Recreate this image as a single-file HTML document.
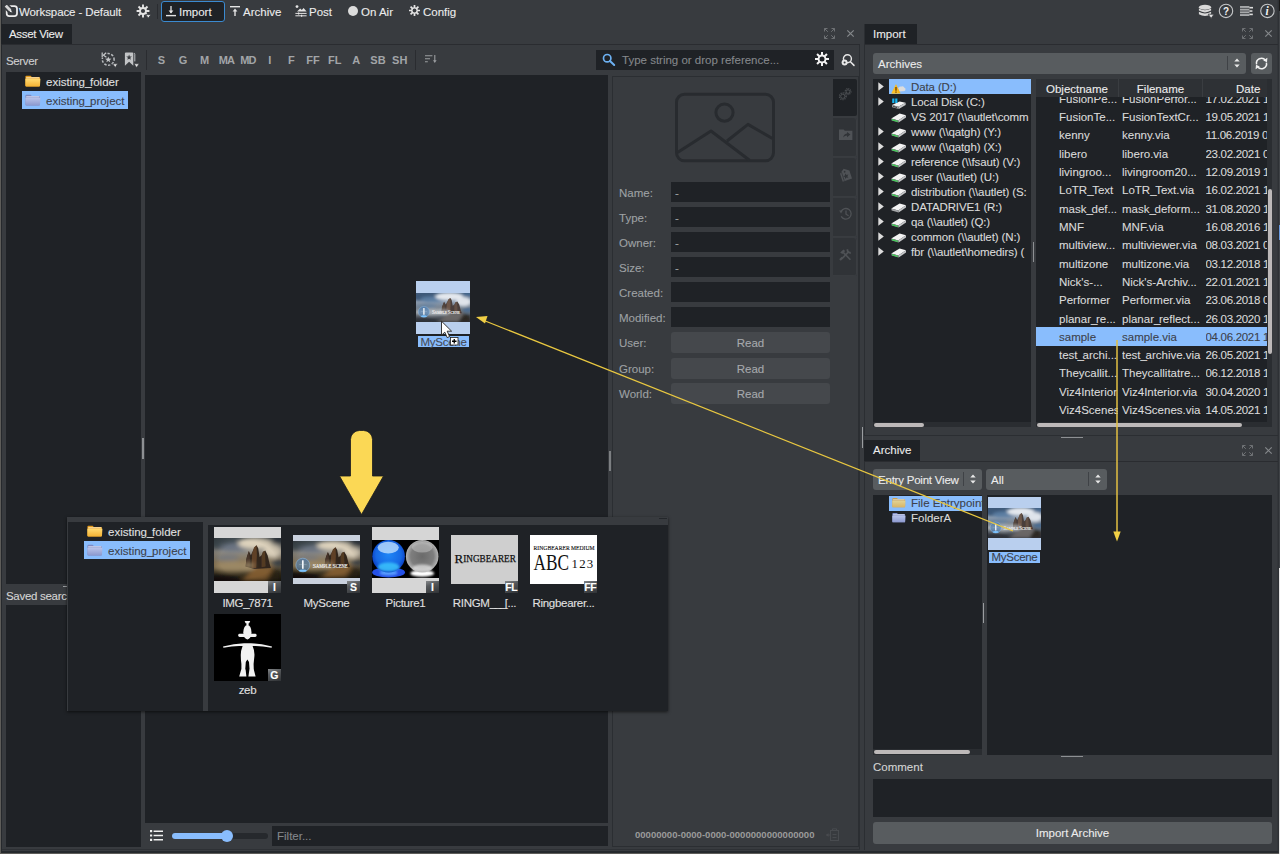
<!DOCTYPE html>
<html><head><meta charset="utf-8"><title>Workspace - Default</title>
<style>
*{box-sizing:border-box;margin:0;padding:0}
html,body{width:1280px;height:854px;overflow:hidden;background:#383b3f}
body{position:relative;font-family:"Liberation Sans",sans-serif;font-size:11.5px;color:#d6d6d6;line-height:14px;-webkit-text-stroke:0.1px}
.a{position:absolute}
.dk{background:#1f2226}
.t{position:absolute;white-space:nowrap}
.sel{background:#89bdfd;color:#3b4048}
svg{position:absolute;overflow:visible}
.fl{top:53px;width:22px;text-align:center;font-weight:bold;color:#a2a5a8;font-size:11px;-webkit-text-stroke:0}
.bdg{width:13.5px;height:11.5px;background:linear-gradient(160deg,#85888b 0%,#55585b 35%,#303336 100%);color:#fff;font-weight:bold;font-size:10.5px;line-height:12px;text-align:center;letter-spacing:-0.3px}
.c1{left:23px;width:59px;overflow:hidden}.c2{left:86px;width:80px;overflow:hidden}.c3{left:169.5px;width:62px;overflow:hidden;letter-spacing:-0.3px}
.u{font-style:normal;letter-spacing:-1.4px}
</style></head><body>
<!-- window edges -->
<div class="a" style="left:1px;top:0;width:1px;height:852px;background:#26292d"></div>
<div class="a" style="left:1277px;top:0;width:1px;height:852px;background:#33363a"></div>
<div class="a" style="left:0;top:851px;width:1279px;height:2px;background:#26292d"></div>
<div class="a" style="left:0;top:0;width:1px;height:854px;background:#5d5c59"></div>
<div class="a" style="left:0;top:853px;width:1280px;height:1px;background:#5d5c59"></div>
<div class="a" style="left:1278px;top:0;width:1px;height:853px;background:#2e3135"></div><div class="a" style="left:1279px;top:0;width:1px;height:568px;background:#404347"></div><div class="a" style="left:1279px;top:568px;width:1px;height:286px;background:#e4e4e4"></div><div class="a" style="left:1279px;top:225px;width:1px;height:15px;background:#6a9be0"></div><div class="a" style="left:1279px;top:0;width:1px;height:11px;background:#1a1a1a"></div>

<svg width="0" height="0" style="left:0;top:0"><defs>
<g id="ic-net"><path d="M0.3 6.6L8.6 1.6L15 3.2L7.2 8.6Z" fill="#f4f4f4"/><path d="M7.2 8.6L15 3.2V5.6L7.6 10.6Z" fill="#c4c6c8"/><path d="M0.3 6.6L7.2 8.6L7.6 10.6L0.6 8.6Z" fill="#8e9092"/><path d="M1 7.7L7 9.5" stroke="#3bd052" stroke-width="1.3"/></g>
<g id="ic-drv"><path d="M0.3 6.6L8.6 1.6L15 3.2L7.2 8.6Z" fill="#f4f4f4"/><path d="M7.2 8.6L15 3.2V5.6L7.6 10.6Z" fill="#c4c6c8"/><path d="M0.3 6.6L7.2 8.6L7.6 10.6L0.6 8.6Z" fill="#a4a6a8"/></g>
<g id="ic-win"><path d="M1 8L8.6 4.4L14.6 5.8L7.4 9.8Z" fill="#f4f4f4"/><path d="M7.4 9.8L14.6 5.8V8L7.8 12Z" fill="#c4c6c8"/><path d="M1 8L7.4 9.8L7.8 12L1.2 10.2Z" fill="#a4a6a8"/><path d="M2.2 9.4L6 10.5" stroke="#2a2d31" stroke-width="0.9"/><path d="M1.2 1.6H3.4V6H1.2ZM4.2 1.6H6.4V6H4.2Z" fill="#19b5f1"/></g>
<g id="ic-warn"><path d="M7 6.4Q8 4 10.4 4.6Q12.6 3.6 13.4 5.8Q15 6.2 14.4 8.2Q13.6 9.4 11.6 9.2L8 9.4Z" fill="#dcdcdc"/><path d="M5 2.2L9.6 11.4H0.4Z" fill="#f7b219"/><path d="M5 2.2L7.2 11.4H0.4Z" fill="#fcc72e" opacity=".7"/><path d="M5 5V8.8M5 9.6V10.8" stroke="#5a2c00" stroke-width="1.2"/></g>
<linearGradient id="fy" x1="0" y1="0" x2="0" y2="1"><stop offset="0" stop-color="#ffda72"/><stop offset="1" stop-color="#f3b234"/></linearGradient>
<linearGradient id="fb" x1="0" y1="0" x2="0" y2="1"><stop offset="0" stop-color="#b9c4ea"/><stop offset="1" stop-color="#8c99cf"/></linearGradient>
<g id="ic-fold-y"><path d="M0.4 1.8Q0.4 0.8 1.4 0.8H5.6L6.8 2H14Q15 2 15 3V10.4Q15 11.4 14 11.4H1.4Q0.4 11.4 0.4 10.4Z" fill="#e39a1c"/><path d="M1.2 2.9H14.4" stroke="#fff4d8" stroke-width="1"/><path d="M0.4 3.8H15.4L15 10.4Q15 11.4 14 11.4H1.4Q0.4 11.4 0.4 10.4Z" fill="url(#fy)"/></g>
<g id="ic-fold-b"><path d="M0.4 1.8Q0.4 0.8 1.4 0.8H5.6L6.8 2H14Q15 2 15 3V10.4Q15 11.4 14 11.4H1.4Q0.4 11.4 0.4 10.4Z" fill="#7e8bc4"/><path d="M1.2 2.9H14.4" stroke="#e8ecfa" stroke-width="1"/><path d="M0.4 3.8H15.4L15 10.4Q15 11.4 14 11.4H1.4Q0.4 11.4 0.4 10.4Z" fill="url(#fb)"/></g>
</defs></svg>
<svg width="0" height="0" style="left:0;top:0"><defs>
<linearGradient id="sky1" x1="0" y1="0" x2="0" y2="1"><stop offset="0" stop-color="#5f7fa0"/><stop offset="0.45" stop-color="#a9b6c4"/><stop offset="0.75" stop-color="#6b7580"/><stop offset="1" stop-color="#3c4652"/></linearGradient>
<linearGradient id="sky2" x1="0" y1="0" x2="0" y2="1"><stop offset="0" stop-color="#5a544a"/><stop offset="0.4" stop-color="#a89676"/><stop offset="0.75" stop-color="#6b5a3e"/><stop offset="1" stop-color="#1e1a14"/></linearGradient>
<radialGradient id="vig" cx="0.5" cy="0.5" r="0.75"><stop offset="0.55" stop-color="#000" stop-opacity="0"/><stop offset="1" stop-color="#000" stop-opacity="0.4"/></radialGradient>
<radialGradient id="bsph" cx="0.5" cy="0.45" r="0.55"><stop offset="0" stop-color="#1f86f6"/><stop offset="0.7" stop-color="#1668e4"/><stop offset="1" stop-color="#0a3cc0"/></radialGradient>
<radialGradient id="gsph" cx="0.5" cy="0.5" r="0.5"><stop offset="0" stop-color="#6a6a6a"/><stop offset="0.7" stop-color="#7e7e7e"/><stop offset="1" stop-color="#b4b4b4"/></radialGradient>
<filter id="bl0" x="-20%" y="-20%" width="140%" height="140%"><feGaussianBlur stdDeviation="0.35"/></filter>
<filter id="bl3" x="-30%" y="-30%" width="160%" height="160%"><feGaussianBlur stdDeviation="5"/></filter>
<filter id="bl1" x="-20%" y="-20%" width="140%" height="140%"><feGaussianBlur stdDeviation="0.8"/></filter>
<filter id="bl2" x="-20%" y="-20%" width="140%" height="140%"><feGaussianBlur stdDeviation="2"/></filter>
<symbol id="scene" viewBox="0 0 160 90" preserveAspectRatio="none"><linearGradient id="pgc" x1="0" y1="0" x2="0" y2="1"><stop offset="0" stop-color="#3c5878"/><stop offset="0.3" stop-color="#8c9cb0"/><stop offset="0.6" stop-color="#6c7680"/><stop offset="0.85" stop-color="#4a5058"/><stop offset="1" stop-color="#2c3038"/></linearGradient><rect width="160" height="90" fill="url(#pgc)"/><g filter="url(#bl3)"><ellipse cx="19.2" cy="9.0" rx="35.2" ry="14.4" fill="#3c5878"/><ellipse cx="48.0" cy="19.8" rx="35.2" ry="9.0" fill="#5d7fa4" opacity=".9"/><ellipse cx="99.2" cy="10.8" rx="41.6" ry="12.6" fill="#e4e8ee"/><ellipse cx="140.8" cy="27.0" rx="22.4" ry="14.4" fill="#e4e8ee" opacity=".95"/><ellipse cx="152.0" cy="5.4" rx="16.0" ry="6.3" fill="#456a92" opacity=".9"/><ellipse cx="32.0" cy="41.4" rx="28.8" ry="6.3" fill="#5d7fa4" opacity=".7"/><ellipse cx="153.6" cy="52.2" rx="16.0" ry="7.2" fill="#456a92" opacity=".9"/><ellipse cx="48.0" cy="59.4" rx="54.4" ry="10.8" fill="#b4b8bc" opacity=".9"/><path d="M64.0 90.0L99.2 59.4L134.4 61.2L160.0 73.8V90.0Z" fill="#6e6a68" opacity=".85"/><path d="M124.8 90.0L140.8 64.8L160.0 70.2V90.0Z" fill="#1c1a14" opacity=".8"/><ellipse cx="16.0" cy="88.2" rx="48.0" ry="10.8" fill="#2c3038" opacity=".9"/></g><g filter="url(#bl1)"><path d="M75.2 59.4L78.4 39.6L83.2 27.0L88.0 36.0L91.2 30.6L96.0 19.8L101.6 15.3L105.6 21.6L108.8 39.6L113.6 36.0L116.8 28.8L122.4 26.1L128.0 36.0L132.8 54.0L136.0 63.0L96.0 64.8Z" fill="#4a3e3a"/><path d="M91.2 32.4L96.0 19.8L101.6 15.3L102.4 36.0L100.8 63.0L89.6 63.0Z" fill="#7c6250" opacity=".7"/><path d="M113.6 37.8L116.8 28.8L121.6 27.0L123.2 59.4L113.6 61.2Z" fill="#7c6250" opacity=".5"/><path d="M76.8 45.0L83.2 27.9L86.4 46.8L84.8 59.4L76.0 59.4Z" fill="#54463e"/></g><g filter="url(#bl3)"><ellipse cx="83.2" cy="57.6" rx="14.4" ry="7.2" fill="#b4b8bc" opacity=".75"/></g><circle cx="23.4" cy="58.5" r="16.6" fill="#3f79b4" opacity=".55"/><circle cx="23.4" cy="58.5" r="16.6" fill="none" stroke="#8fc0ee" stroke-width="1.6" opacity=".75"/><path d="M21.4 46.879999999999995H25.4V67.63H21.4Z" fill="#f4f7fa"/><path d="M14.269999999999998 57.5H32.53" stroke="#cfe2f4" stroke-width="1" opacity=".6"/><ellipse cx="23.4" cy="72.112" rx="9.13" ry="2.8220000000000005" fill="#7cc4ff"/><text x="47.2" y="66.2" font-family="Liberation Serif,serif" font-size="13.0" fill="#ececec" stroke="#ececec" stroke-width="0.5" textLength="83.2" lengthAdjust="spacingAndGlyphs"><tspan font-size="17.1">S</tspan>AMPLE <tspan font-size="17.1">S</tspan>CENE</text></symbol>
<symbol id="scene2" viewBox="0 0 160 90" preserveAspectRatio="none"><linearGradient id="pgw" x1="0" y1="0" x2="0" y2="1"><stop offset="0" stop-color="#4a545c"/><stop offset="0.3" stop-color="#8f8c86"/><stop offset="0.6" stop-color="#857252"/><stop offset="0.85" stop-color="#3a3220"/><stop offset="1" stop-color="#15120c"/></linearGradient><rect width="160" height="90" fill="url(#pgw)"/><g filter="url(#bl3)"><ellipse cx="19.2" cy="9.0" rx="35.2" ry="14.4" fill="#4a545c"/><ellipse cx="48.0" cy="19.8" rx="35.2" ry="9.0" fill="#6d7684" opacity=".9"/><ellipse cx="99.2" cy="10.8" rx="41.6" ry="12.6" fill="#ddd2bc"/><ellipse cx="140.8" cy="27.0" rx="22.4" ry="14.4" fill="#ddd2bc" opacity=".95"/><ellipse cx="152.0" cy="5.4" rx="16.0" ry="6.3" fill="#303a46" opacity=".9"/><ellipse cx="32.0" cy="41.4" rx="28.8" ry="6.3" fill="#6d7684" opacity=".7"/><ellipse cx="153.6" cy="52.2" rx="16.0" ry="7.2" fill="#303a46" opacity=".9"/><ellipse cx="48.0" cy="59.4" rx="54.4" ry="10.8" fill="#a08c68" opacity=".9"/><path d="M64.0 90.0L99.2 59.4L134.4 61.2L160.0 73.8V90.0Z" fill="#8a6232" opacity=".85"/><path d="M124.8 90.0L140.8 64.8L160.0 70.2V90.0Z" fill="#1c1a14" opacity=".8"/><ellipse cx="16.0" cy="88.2" rx="48.0" ry="10.8" fill="#15120c" opacity=".9"/></g><g filter="url(#bl1)"><path d="M75.2 59.4L78.4 39.6L83.2 27.0L88.0 36.0L91.2 30.6L96.0 19.8L101.6 15.3L105.6 21.6L108.8 39.6L113.6 36.0L116.8 28.8L122.4 26.1L128.0 36.0L132.8 54.0L136.0 63.0L96.0 64.8Z" fill="#33271e"/><path d="M91.2 32.4L96.0 19.8L101.6 15.3L102.4 36.0L100.8 63.0L89.6 63.0Z" fill="#6e4a2a" opacity=".75"/><path d="M113.6 37.8L116.8 28.8L121.6 27.0L123.2 59.4L113.6 61.2Z" fill="#6e4a2a" opacity=".55"/><path d="M76.8 45.0L83.2 27.9L86.4 46.8L84.8 59.4L76.0 59.4Z" fill="#47352a"/></g><g filter="url(#bl3)"><ellipse cx="83.2" cy="57.6" rx="14.4" ry="7.2" fill="#a08c68" opacity=".75"/></g><rect width="160" height="90" fill="url(#vig)"/><circle cx="23.4" cy="58.5" r="16.6" fill="#3f79b4" opacity=".55"/><circle cx="23.4" cy="58.5" r="16.6" fill="none" stroke="#8fc0ee" stroke-width="1.6" opacity=".75"/><path d="M21.4 46.879999999999995H25.4V67.63H21.4Z" fill="#f4f7fa"/><path d="M14.269999999999998 57.5H32.53" stroke="#cfe2f4" stroke-width="1" opacity=".6"/><ellipse cx="23.4" cy="72.112" rx="9.13" ry="2.8220000000000005" fill="#7cc4ff"/><text x="47.2" y="66.2" font-family="Liberation Serif,serif" font-size="13.0" fill="#ececec" stroke="#ececec" stroke-width="0.5" textLength="83.2" lengthAdjust="spacingAndGlyphs"><tspan font-size="17.1">S</tspan>AMPLE <tspan font-size="17.1">S</tspan>CENE</text></symbol>
<symbol id="photo" viewBox="0 0 150 96" preserveAspectRatio="none"><linearGradient id="pgw" x1="0" y1="0" x2="0" y2="1"><stop offset="0" stop-color="#4a545c"/><stop offset="0.3" stop-color="#8f8c86"/><stop offset="0.6" stop-color="#857252"/><stop offset="0.85" stop-color="#3a3220"/><stop offset="1" stop-color="#15120c"/></linearGradient><rect width="150" height="96" fill="url(#pgw)"/><g filter="url(#bl3)"><ellipse cx="18.0" cy="9.6" rx="33.0" ry="15.4" fill="#4a545c"/><ellipse cx="45.0" cy="21.1" rx="33.0" ry="9.6" fill="#6d7684" opacity=".9"/><ellipse cx="93.0" cy="11.5" rx="39.0" ry="13.4" fill="#ddd2bc"/><ellipse cx="132.0" cy="28.8" rx="21.0" ry="15.4" fill="#ddd2bc" opacity=".95"/><ellipse cx="142.5" cy="5.8" rx="15.0" ry="6.7" fill="#303a46" opacity=".9"/><ellipse cx="30.0" cy="44.2" rx="27.0" ry="6.7" fill="#6d7684" opacity=".7"/><ellipse cx="144.0" cy="55.7" rx="15.0" ry="7.7" fill="#303a46" opacity=".9"/><ellipse cx="45.0" cy="63.4" rx="51.0" ry="11.5" fill="#a08c68" opacity=".9"/><path d="M60.0 96.0L93.0 63.4L126.0 65.3L150.0 78.7V96.0Z" fill="#8a6232" opacity=".85"/><path d="M117.0 96.0L132.0 69.1L150.0 74.9V96.0Z" fill="#1c1a14" opacity=".8"/><ellipse cx="15.0" cy="94.1" rx="45.0" ry="11.5" fill="#15120c" opacity=".9"/></g><g filter="url(#bl1)"><path d="M70.5 63.4L73.5 42.2L78.0 28.8L82.5 38.4L85.5 32.6L90.0 21.1L95.2 16.3L99.0 23.0L102.0 42.2L106.5 38.4L109.5 30.7L114.8 27.8L120.0 38.4L124.5 57.6L127.5 67.2L90.0 69.1Z" fill="#33271e"/><path d="M85.5 34.6L90.0 21.1L95.2 16.3L96.0 38.4L94.5 67.2L84.0 67.2Z" fill="#6e4a2a" opacity=".75"/><path d="M106.5 40.3L109.5 30.7L114.0 28.8L115.5 63.4L106.5 65.3Z" fill="#6e4a2a" opacity=".55"/><path d="M72.0 48.0L78.0 29.8L81.0 49.9L79.5 63.4L71.2 63.4Z" fill="#47352a"/></g><g filter="url(#bl3)"><ellipse cx="78.0" cy="61.4" rx="13.5" ry="7.7" fill="#a08c68" opacity=".75"/></g><rect width="150" height="96" fill="url(#vig)"/></symbol>
</defs></svg>
<!-- TOPBAR -->
<div id="topbar">
<!-- workspace icon -->
<svg style="left:0;top:0" width="20" height="20" viewBox="0 0 20 20"><rect x="6.7" y="6" width="10.3" height="10.2" rx="2.6" fill="none" stroke="#ececec" stroke-width="1.75"/><path d="M3.5 6.7L6.7 3.5L11.8 8.6L12.7 12.7L8.6 11.8Z" fill="#d6d6d6" stroke="#383b3f" stroke-width="1.7" stroke-linejoin="round"/><path d="M10.4 10.2L12.5 12.5L9.9 11.8Z" fill="#fff"/></svg>
<span class="t" style="left:19px;top:5px;color:#ececec;letter-spacing:-0.1px">Workspace - Default</span>
<!-- gear -->
<svg style="left:136px;top:4px" width="16" height="15" viewBox="0 0 16 15"><g stroke="#e4e4e4" stroke-width="1.9" stroke-linecap="butt"><path d="M7 0.6V13.4M0.6 7H13.4M2.5 2.5L11.5 11.5M11.5 2.5L2.5 11.5"/></g><circle cx="7" cy="7" r="3.9" fill="#e4e4e4"/><circle cx="7" cy="7" r="2.1" fill="#383b3f"/><path d="M9.6 10.6h5.4l-2.7 3.6z" fill="#e8e8e8" stroke="#383b3f" stroke-width="0.9"/></svg>
<div class="a" style="left:157px;top:4px;width:1px;height:15px;background:#2a2c30"></div>
<!-- Import button -->
<div class="a" style="left:161px;top:1px;width:64px;height:21px;border:1px solid #3b8ad0;border-radius:3px;background:#1f2226"></div>
<svg style="left:166px;top:6px" width="10" height="11" viewBox="0 0 10 11"><path d="M5 0V7" stroke="#e4e4e4" stroke-width="1.3"/><path d="M2.6 4.6L5 7.6L7.4 4.6Z" fill="#e4e4e4"/><path d="M0 9.6H10" stroke="#e4e4e4" stroke-width="1.4"/></svg>
<span class="t" style="left:179px;top:5px;color:#ececec">Import</span>
<!-- Archive -->
<svg style="left:230px;top:6px" width="10" height="11" viewBox="0 0 10 11"><path d="M0 0.7H10" stroke="#e4e4e4" stroke-width="1.4"/><path d="M5 4V10" stroke="#e4e4e4" stroke-width="1.4"/><path d="M2.6 5.6L5 2.6L7.4 5.6Z" fill="#e4e4e4"/></svg>
<span class="t" style="left:243px;top:5px;color:#ececec">Archive</span>
<!-- Post -->
<svg style="left:295px;top:5px" width="12" height="12" viewBox="0 0 12 12"><circle cx="2" cy="1.6" r="1.4" fill="#e4e4e4"/><path d="M2 6.4L5.2 3.6L6.8 5L8.6 3L11.6 6.4Z" fill="#e4e4e4"/><path d="M0.4 8.4H11.6M0.4 10.8H11.6" stroke="#e4e4e4" stroke-width="1"/><path d="M3.6 7.4V9.4M6.6 9.8V11.8" stroke="#e4e4e4" stroke-width="1.2"/></svg>
<span class="t" style="left:309px;top:5px;color:#ececec">Post</span>
<!-- On Air -->
<div class="a" style="left:348px;top:6px;width:10px;height:10px;border-radius:5px;background:#dcdcdc"></div>
<span class="t" style="left:361px;top:5px;color:#ececec">On Air</span>
<!-- Config -->
<svg style="left:409px;top:5px" width="11" height="11" viewBox="0 0 14 14"><g stroke="#e4e4e4" stroke-width="2.2"><path d="M7 0V14M0 7H14M2 2L12 12M12 2L2 12"/></g><circle cx="7" cy="7" r="4.2" fill="#e4e4e4"/><circle cx="7" cy="7" r="2.4" fill="#383b3f"/></svg>
<span class="t" style="left:423px;top:5px;color:#ececec">Config</span>
<!-- top right icons -->
<svg style="left:1198px;top:3px" width="17" height="17" viewBox="1198 3 17 17"><g fill="#d9d9d9"><ellipse cx="1205" cy="7.2" rx="6.1" ry="2.5"/><path d="M1198.9 8.4Q1205 12 1211.1 8.4V10.6Q1205 14.2 1198.9 10.6Z"/><path d="M1198.9 11.8Q1205 15.4 1211.1 11.8V14.2Q1205 17.8 1198.9 14.2Z"/></g><path d="M1208.2 14.2H1214L1211.1 18.4Z" fill="#e4e4e4" stroke="#383b3f" stroke-width="0.8"/></svg>
<svg style="left:1218px;top:3px" width="16" height="16" viewBox="0 0 16 16"><circle cx="8" cy="7.9" r="6.7" fill="none" stroke="#c4c6c8" stroke-width="1.1"/><text x="8" y="11.6" text-anchor="middle" font-family="Liberation Sans,sans-serif" font-weight="bold" font-size="10" fill="#f2f2f2">?</text></svg>
<svg style="left:1240px;top:6px" width="13" height="10" viewBox="0 0 13 10"><g fill="#a6a8aa"><rect x="0" y="0" width="9.4" height="1.9"/><rect x="0" y="2.7" width="9.4" height="1.9"/><rect x="0" y="5.4" width="9.4" height="1.9"/><rect x="0" y="8.1" width="9.4" height="1.9"/></g><g fill="#dcdcdc"><rect x="9.4" y="0.9" width="3.6" height="1.6"/><rect x="9.4" y="4.3" width="3" height="1.5"/><rect x="9.4" y="7.6" width="3.4" height="1.6"/></g></svg>
<svg style="left:1259px;top:3px" width="16" height="16" viewBox="0 0 16 16"><circle cx="8.4" cy="7.9" r="6.7" fill="none" stroke="#c4c6c8" stroke-width="1.1"/><text x="8.2" y="11.8" text-anchor="middle" font-family="Liberation Serif,serif" font-weight="bold" font-style="italic" font-size="11.5" fill="#f2f2f2">i</text></svg>
<!-- splitter handles -->
<div class="a" style="left:862px;top:427px;width:1px;height:21px;background:#9a9da0"></div>
<div class="a" style="left:859px;top:44px;width:1px;height:806px;background:#2b2e32"></div>
<div class="a" style="left:2px;top:849px;width:858px;height:1px;background:#2e3135"></div>
<div class="a" style="left:142px;top:438px;width:1.6px;height:21px;background:#8d9093"></div>
<div class="a" style="left:609px;top:451px;width:2px;height:20px;background:#7c7f82"></div>
<div class="a" style="left:1033px;top:242px;width:1px;height:20px;background:#8d9093"></div>
</div>
<!-- TABS -->
<div id="tabs">
<div class="a" style="left:2px;top:44px;width:858px;height:1px;background:#2a2c30"></div>
<div class="a" style="left:864px;top:44px;width:414px;height:1px;background:#2a2c30"></div>
<div class="a dk" style="left:1px;top:24px;width:71px;height:20px"></div>
<span class="t" style="left:9px;top:27px;color:#ececec;letter-spacing:-0.3px">Asset View</span>
<div class="a dk" style="left:864px;top:24px;width:53px;height:20px"></div>
<span class="t" style="left:873px;top:27px;color:#ececec">Import</span>
</div>
<!-- LEFT: server -->
<div id="server">
<span class="t" style="left:6px;top:54px;color:#cfcfcf;letter-spacing:-0.35px">Server</span>
<div class="a dk" style="left:6px;top:72px;width:135px;height:512px"></div>
<div class="a dk" style="left:6px;top:605px;width:135px;height:242px"></div>
<span class="t" style="left:6px;top:589px;color:#d4d4d4;letter-spacing:-0.3px">Saved searc</span>
<div class="a" style="left:63px;top:586px;width:4px;height:1px;background:#9a9da0"></div>
<!-- server toolbar icons -->
<svg style="left:100px;top:51px" width="19" height="18" viewBox="100 51 19 18"><circle cx="108.2" cy="59.4" r="5.9" fill="none" stroke="#b9bcbf" stroke-width="1.5" stroke-dasharray="2.4 1.5" stroke-dashoffset="1"/><rect x="100.6" y="51.6" width="6" height="6.2" fill="#383b3f"/><path d="M102.2 52.6V57.6" stroke="#c6c8ca" stroke-width="1.2"/><path d="M106.2 52.8L103.4 55.2L106.4 57.2" stroke="#c6c8ca" stroke-width="1.2" fill="none"/><path d="M108.30 56.40L109.12 58.57L111.44 58.68L109.63 60.13L110.24 62.37L108.30 61.10L106.36 62.37L106.97 60.13L105.16 58.68L107.48 58.57Z" fill="#c6c8ca"/><path d="M112.8 63.8H117.6L115.2 67.6Z" fill="#e6e6e6" stroke="#383b3f" stroke-width="0.7"/></svg>
<svg style="left:124px;top:51px" width="17" height="18" viewBox="124 51 17 18"><path d="M133.9 53.2Q134.8 53.2 134.8 54.2V61.4" stroke="#b9bcbf" stroke-width="1" fill="none"/><path d="M124.9 53.6Q124.9 52.6 125.9 52.6H132.3Q133.3 52.6 133.3 53.6V65.8L129.1 61.8L124.9 65.8Z" fill="#c2c4c6"/><path d="M129.10 54.40L129.83 56.39L131.95 56.47L130.29 57.79L130.86 59.83L129.10 58.65L127.34 59.83L127.91 57.79L126.25 56.47L128.37 56.39Z" fill="#383b3f"/><path d="M134 63.8H139.2L136.6 67.6Z" fill="#e6e6e6" stroke="#383b3f" stroke-width="0.7"/></svg>
<!-- folder icons -->
<svg style="left:25px;top:75px" width="16" height="13" viewBox="0 0 16 13"><use href="#ic-fold-y"/></svg>
<span class="t" style="left:46px;top:75px;color:#e0e0e0">existing<i class="u">_</i>folder</span>
<div class="a sel" style="left:22px;top:91px;width:106px;height:18px"></div>
<svg style="left:25px;top:94px" width="16" height="13" viewBox="0 0 16 13"><use href="#ic-fold-b"/></svg>
<span class="t" style="left:46px;top:94px;color:#3d424c">existing<i class="u">_</i>project</span>
</div>
<!-- CENTER: assets -->
<div id="assets">
<div class="a" style="left:146px;top:50px;width:1px;height:20px;background:#2a2c30"></div>
<div class="a" style="left:415px;top:50px;width:1px;height:20px;background:#2a2c30"></div>
<span class="t fl" style="left:150.3px">S</span><span class="t fl" style="left:172.0px">G</span><span class="t fl" style="left:193.6px">M</span><span class="t fl" style="left:215.3px;letter-spacing:-0.9px">MA</span><span class="t fl" style="left:237.0px;letter-spacing:-0.9px">MD</span><span class="t fl" style="left:258.7px">I</span><span class="t fl" style="left:280.3px">F</span><span class="t fl" style="left:302.0px">FF</span><span class="t fl" style="left:323.7px">FL</span><span class="t fl" style="left:345.3px">A</span><span class="t fl" style="left:367.0px">SB</span><span class="t fl" style="left:388.7px">SH</span>
<svg style="left:425px;top:55px" width="12" height="9" viewBox="0 0 12 9"><path d="M0 0.7H7.4M0 3.7H5M0 6.7H2.8" stroke="#9b9ea1" stroke-width="1.1"/><path d="M9.8 0V6" stroke="#9b9ea1" stroke-width="1.1"/><path d="M8 5.2L9.8 8L11.6 5.2Z" fill="#9b9ea1"/></svg>
<div class="a dk" style="left:145px;top:75px;width:463px;height:748px"></div>
<!-- bottom bar -->
<svg style="left:150px;top:830px" width="13" height="11" viewBox="0 0 13 11"><path d="M0 1.2H2.2M0 5.5H2.2M0 9.8H2.2" stroke="#f0f0f0" stroke-width="2.2"/><path d="M3.6 1.2H13M3.6 5.5H13M3.6 9.8H13" stroke="#f0f0f0" stroke-width="1.6"/></svg>
<div class="a" style="left:172px;top:833px;width:96px;height:6px;border-radius:3px;background:#26292d"></div>
<div class="a" style="left:172px;top:833px;width:56px;height:6px;border-radius:3px;background:#89bdfd"></div>
<div class="a" style="left:221px;top:830px;width:12px;height:12px;border-radius:6px;background:#89bdfd"></div>
<div class="a dk" style="left:272px;top:826px;width:336px;height:20px"></div>
<span class="t" style="left:277px;top:829px;color:#84878b">Filter...</span>
<!-- search -->
<div class="a dk" style="left:596px;top:50px;width:238px;height:20px"></div>
<svg style="left:602px;top:53px" width="14" height="13" viewBox="0 0 14 13"><circle cx="5.2" cy="5.2" r="3.7" fill="none" stroke="#6db1f2" stroke-width="1.7"/><path d="M8 8L12.2 12" stroke="#6db1f2" stroke-width="2" stroke-linecap="round"/></svg>
<span class="t" style="left:622px;top:53px;color:#84878b">Type string or drop reference...</span>
<svg style="left:815px;top:52px" width="14" height="14" viewBox="0 0 14 14"><g stroke="#f2f2f2" stroke-width="2"><path d="M7 0V14M0 7H14M2.05 2.05L11.95 11.95M11.95 2.05L2.05 11.95"/></g><circle cx="7" cy="7" r="4.4" fill="#f2f2f2"/><circle cx="7" cy="7" r="2.5" fill="#1f2226"/></svg>
<svg style="left:841px;top:54px" width="14" height="13" viewBox="0 0 14 13"><circle cx="6.4" cy="4.8" r="4" fill="none" stroke="#e8e8e8" stroke-width="1.4"/><path d="M9.4 7.8L13 11.4" stroke="#e8e8e8" stroke-width="1.5" stroke-linecap="round"/><circle cx="3.6" cy="8.4" r="3" fill="#e8e8e8"/><circle cx="3.6" cy="8.4" r="1" fill="#383b3f"/></svg>
<!-- max/close -->
<svg style="left:824px;top:28px" width="11" height="11" viewBox="0 0 11 11"><g stroke="#6e7174" stroke-width="1" fill="none"><path d="M0.5 3.5V0.5H3.5M0.5 0.5L3.8 3.8M7.5 0.5H10.5V3.5M10.5 0.5L7.2 3.8M0.5 7.5V10.5H3.5M0.5 10.5L3.8 7.2M10.5 7.5V10.5H7.5M10.5 10.5L7.2 7.2"/></g></svg>
<svg style="left:847px;top:30px" width="7" height="7" viewBox="0 0 7 7"><path d="M0.3 0.3L6.7 6.7M6.7 0.3L0.3 6.7" stroke="#85888b" stroke-width="1.2"/></svg>
</div>
<!-- PROPS -->
<div id="props">
<div class="a" style="left:612px;top:76px;width:247px;height:771px;border:1px solid #2b2e32"></div>
<svg style="left:670px;top:88px" width="110" height="80" viewBox="670 88 110 80"><g fill="none" stroke="#282b2f" stroke-width="3" stroke-linejoin="round"><rect x="676.5" y="94.3" width="97" height="66.5" rx="8"/><circle cx="724.5" cy="112.6" r="8.6"/><path d="M677.5 152.6L711 131L749.5 160.3M727 141L748 124.4L772.5 138.5"/></g></svg>
<span class="t" style="left:619px;top:186px;color:#9ea1a4">Name:</span><div class="a dk" style="left:671px;top:182px;width:159px;height:20px"></div><span class="t" style="left:675px;top:186px;color:#9ea1a4">-</span>
<span class="t" style="left:619px;top:211px;color:#9ea1a4">Type:</span><div class="a dk" style="left:671px;top:207px;width:159px;height:20px"></div><span class="t" style="left:675px;top:211px;color:#9ea1a4">-</span>
<span class="t" style="left:619px;top:236px;color:#9ea1a4">Owner:</span><div class="a dk" style="left:671px;top:232px;width:159px;height:20px"></div><span class="t" style="left:675px;top:236px;color:#9ea1a4">-</span>
<span class="t" style="left:619px;top:261px;color:#9ea1a4">Size:</span><div class="a dk" style="left:671px;top:257px;width:159px;height:20px"></div><span class="t" style="left:675px;top:261px;color:#9ea1a4">-</span>
<span class="t" style="left:619px;top:286px;color:#9ea1a4">Created:</span><div class="a dk" style="left:671px;top:282px;width:159px;height:20px"></div>
<span class="t" style="left:619px;top:311px;color:#9ea1a4">Modified:</span><div class="a dk" style="left:671px;top:307px;width:159px;height:20px"></div>
<span class="t" style="left:619px;top:336px;color:#9ea1a4">User:</span><div class="a" style="left:671px;top:332px;width:159px;height:21px;border-radius:3px;background:#45484c;text-align:center;line-height:22.6px;color:#a6a9ac">Read</div>
<span class="t" style="left:619px;top:362px;color:#9ea1a4">Group:</span><div class="a" style="left:671px;top:358px;width:159px;height:21px;border-radius:3px;background:#45484c;text-align:center;line-height:22.6px;color:#a6a9ac">Read</div>
<span class="t" style="left:619px;top:387px;color:#9ea1a4">World:</span><div class="a" style="left:671px;top:383px;width:159px;height:21px;border-radius:3px;background:#45484c;text-align:center;line-height:22.6px;color:#a6a9ac">Read</div>
<div class="a dk" style="left:833px;top:79px;width:24px;height:37px;border-radius:0 2px 2px 0"></div>
<div class="a" style="left:833px;top:118px;width:24px;height:39px;background:#303337;border-radius:0 3px 3px 0;box-shadow:inset -1px 0 0 #3a3d41,inset 0 -1px 0 #393c40"></div>
<div class="a" style="left:833px;top:158px;width:24px;height:39px;background:#303337;border-radius:0 3px 3px 0;box-shadow:inset -1px 0 0 #3a3d41,inset 0 -1px 0 #393c40"></div>
<div class="a" style="left:833px;top:198px;width:24px;height:39px;background:#303337;border-radius:0 3px 3px 0;box-shadow:inset -1px 0 0 #3a3d41,inset 0 -1px 0 #393c40"></div>
<div class="a" style="left:833px;top:238px;width:24px;height:38px;background:#303337;border-radius:0 3px 3px 0;box-shadow:inset -1px 0 0 #3a3d41,inset 0 -1px 0 #393c40"></div>
<svg style="left:838px;top:87px" width="14" height="14" viewBox="0 0 14 14"><g fill="none" stroke="#4f5256"><circle cx="4.8" cy="9.3" r="2.1" stroke-width="0.9"/><circle cx="4.8" cy="9.3" r="3.3" stroke-width="1.4" stroke-dasharray="1.1 1.05"/><circle cx="10" cy="4.6" r="1.8" stroke-width="0.9"/><circle cx="10" cy="4.6" r="2.9" stroke-width="1.3" stroke-dasharray="1 0.95"/></g></svg>
<svg style="left:839px;top:129px" width="14" height="11" viewBox="0 0 14 11"><path d="M0 0.4H4.6L5.8 1.8H13.4V11H0Z" fill="#4f5256"/><path d="M4.2 8.6Q4.6 5 8 4.6V3L11.4 5.6L8 8.2V6.6Q5.6 6.6 4.2 8.6Z" fill="#303337"/></svg>
<svg style="left:839px;top:168px" width="13" height="13" viewBox="0 0 13 13"><g transform="rotate(-18 6.5 6.5)"><path d="M6.5 0.4L11.4 4V12.4H1.6V4Z" fill="#4f5256"/><circle cx="6.5" cy="3.6" r="0.9" fill="#303337"/><path d="M6.5 5.4L7.3 7.2L9.2 7.4L7.8 8.7L8.2 10.6L6.5 9.6L4.8 10.6L5.2 8.7L3.8 7.4L5.7 7.2Z" fill="#303337"/><path d="M3.4 3V12" stroke="#303337" stroke-width="0.7"/></g></svg>
<svg style="left:839px;top:207px" width="14" height="14" viewBox="0 0 14 14"><g fill="none" stroke="#4f5256" stroke-width="1.3"><path d="M2.2 9.4A5.3 5.3 0 1 0 2 4.6"/><path d="M7 3.6V7.2L9.6 8.8"/></g><path d="M0.2 3.4L3.8 3.6L2 6.6Z" fill="#4f5256"/></svg>
<svg style="left:839px;top:248px" width="13" height="13" viewBox="0 0 13 13"><g stroke="#4f5256" fill="none"><path d="M3 10.6L10 3.4" stroke-width="1.6"/><path d="M8.6 1.2A2.6 2.6 0 0 0 11.8 4.6" stroke-width="1.8"/><path d="M1 12L3.4 9.6" stroke-width="2.2"/><path d="M4.2 4.4L11.4 11.8" stroke-width="1.6"/><path d="M1.2 4.4L4.4 1.4L6.2 3L3.4 6Z" fill="#4f5256" stroke="none"/></g></svg>
<span class="t" style="left:635px;top:828px;color:#9a9a9a;font-weight:bold;font-size:9.55px;letter-spacing:0;-webkit-text-stroke:0">00000000-0000-0000-0000000000000000</span>
<svg style="left:826px;top:828px" width="13" height="13" viewBox="0 0 13 13"><g fill="none" stroke="#484b4f" stroke-width="1"><rect x="4.5" y="2.5" width="8" height="10"/><path d="M6.5 2.5V0.8H10.5V2.5M6.5 6.5H10.5M6.5 9.5H10.5M0 7H4"/></g><path d="M2.5 5L0.2 7L2.5 9Z" fill="#484b4f"/></svg>
</div>
<!-- IMPORT -->
<div id="import">
<div class="a" style="left:863.5px;top:24px;width:1px;height:412px;background:#2b2e32"></div>
<div class="a" style="left:864px;top:435px;width:414px;height:1px;background:#2b2e32"></div>
<div class="a" style="left:873px;top:53px;width:373px;height:21px;border-radius:3px;background:#585c5f"></div>
<span class="t" style="left:878px;top:57px;color:#ececec">Archives</span>
<div class="a" style="left:1227px;top:56px;width:1px;height:14px;background:#3f4246"></div>
<svg style="left:1234px;top:58px" width="6" height="10" viewBox="0 0 6 10"><path d="M0.3 3.6L3 0.4L5.7 3.6ZM0.3 6.4L3 9.6L5.7 6.4Z" fill="#e8e8e8"/></svg>
<div class="a" style="left:1251px;top:53px;width:21px;height:21px;border-radius:3px;background:#585c5f"></div>
<svg style="left:1255px;top:57px" width="13" height="13" viewBox="0 0 13 13"><g fill="none" stroke="#f0f0f0" stroke-width="1.5"><path d="M1.6 7.4A5 5 0 0 1 10.4 3.2"/><path d="M11.4 5.6A5 5 0 0 1 2.6 9.8"/></g><path d="M8.2 3.6L12.4 0.8L12 5.2Z" fill="#f0f0f0"/><path d="M4.8 9.4L0.6 12.2L1 7.8Z" fill="#f0f0f0"/></svg>
<div class="a dk" style="left:873px;top:79px;width:158px;height:343px;overflow:hidden" id="tree1">
<div class="a sel" style="left:16px;top:0;width:142px;height:15px"></div>
<svg style="left:5px;top:3px" width="6" height="9" viewBox="0 0 6 9"><path d="M0.3 0.3L5.8 4.5L0.3 8.7Z" fill="#dcdcdc"/></svg><svg style="left:18px;top:3px" width="15" height="13" viewBox="0 0 15 13"><use href="#ic-warn"/></svg><span class="t" style="letter-spacing:-0.12px;left:38px;top:1px;color:#3d424c">Data (D:)</span>
<svg style="left:5px;top:18px" width="6" height="9" viewBox="0 0 6 9"><path d="M0.3 0.3L5.8 4.5L0.3 8.7Z" fill="#dcdcdc"/></svg><svg style="left:18px;top:18px" width="15" height="13" viewBox="0 0 15 13"><use href="#ic-win"/></svg><span class="t" style="letter-spacing:-0.12px;left:38px;top:16px;color:#dadada">Local Disk (C:)</span>
<svg style="left:18px;top:33px" width="15" height="13" viewBox="0 0 15 13"><use href="#ic-net"/></svg><span class="t" style="letter-spacing:-0.12px;left:38px;top:31px;color:#dadada">VS 2017 (\\autlet\comm</span>
<svg style="left:5px;top:48px" width="6" height="9" viewBox="0 0 6 9"><path d="M0.3 0.3L5.8 4.5L0.3 8.7Z" fill="#dcdcdc"/></svg><svg style="left:18px;top:48px" width="15" height="13" viewBox="0 0 15 13"><use href="#ic-net"/></svg><span class="t" style="letter-spacing:-0.12px;left:38px;top:46px;color:#dadada">www (\\qatgh) (Y:)</span>
<svg style="left:5px;top:63px" width="6" height="9" viewBox="0 0 6 9"><path d="M0.3 0.3L5.8 4.5L0.3 8.7Z" fill="#dcdcdc"/></svg><svg style="left:18px;top:63px" width="15" height="13" viewBox="0 0 15 13"><use href="#ic-net"/></svg><span class="t" style="letter-spacing:-0.12px;left:38px;top:61px;color:#dadada">www (\\qatgh) (X:)</span>
<svg style="left:5px;top:78px" width="6" height="9" viewBox="0 0 6 9"><path d="M0.3 0.3L5.8 4.5L0.3 8.7Z" fill="#dcdcdc"/></svg><svg style="left:18px;top:78px" width="15" height="13" viewBox="0 0 15 13"><use href="#ic-net"/></svg><span class="t" style="letter-spacing:-0.12px;left:38px;top:76px;color:#dadada">reference (\\fsaut) (V:)</span>
<svg style="left:5px;top:93px" width="6" height="9" viewBox="0 0 6 9"><path d="M0.3 0.3L5.8 4.5L0.3 8.7Z" fill="#dcdcdc"/></svg><svg style="left:18px;top:93px" width="15" height="13" viewBox="0 0 15 13"><use href="#ic-net"/></svg><span class="t" style="letter-spacing:-0.12px;left:38px;top:91px;color:#dadada">user (\\autlet) (U:)</span>
<svg style="left:5px;top:108px" width="6" height="9" viewBox="0 0 6 9"><path d="M0.3 0.3L5.8 4.5L0.3 8.7Z" fill="#dcdcdc"/></svg><svg style="left:18px;top:108px" width="15" height="13" viewBox="0 0 15 13"><use href="#ic-net"/></svg><span class="t" style="letter-spacing:-0.12px;left:38px;top:106px;color:#dadada">distribution (\\autlet) (S:</span>
<svg style="left:5px;top:123px" width="6" height="9" viewBox="0 0 6 9"><path d="M0.3 0.3L5.8 4.5L0.3 8.7Z" fill="#dcdcdc"/></svg><svg style="left:18px;top:123px" width="15" height="13" viewBox="0 0 15 13"><use href="#ic-drv"/></svg><span class="t" style="letter-spacing:-0.12px;left:38px;top:121px;color:#dadada">DATADRIVE1 (R:)</span>
<svg style="left:5px;top:138px" width="6" height="9" viewBox="0 0 6 9"><path d="M0.3 0.3L5.8 4.5L0.3 8.7Z" fill="#dcdcdc"/></svg><svg style="left:18px;top:138px" width="15" height="13" viewBox="0 0 15 13"><use href="#ic-net"/></svg><span class="t" style="letter-spacing:-0.12px;left:38px;top:136px;color:#dadada">qa (\\autlet) (Q:)</span>
<svg style="left:5px;top:153px" width="6" height="9" viewBox="0 0 6 9"><path d="M0.3 0.3L5.8 4.5L0.3 8.7Z" fill="#dcdcdc"/></svg><svg style="left:18px;top:153px" width="15" height="13" viewBox="0 0 15 13"><use href="#ic-net"/></svg><span class="t" style="letter-spacing:-0.12px;left:38px;top:151px;color:#dadada">common (\\autlet) (N:)</span>
<svg style="left:5px;top:168px" width="6" height="9" viewBox="0 0 6 9"><path d="M0.3 0.3L5.8 4.5L0.3 8.7Z" fill="#dcdcdc"/></svg><svg style="left:18px;top:168px" width="15" height="13" viewBox="0 0 15 13"><use href="#ic-net"/></svg><span class="t" style="letter-spacing:-0.12px;left:38px;top:166px;color:#dadada">fbr (\\autlet\homedirs) (</span>
</div>
<div class="a" style="left:873px;top:422px;width:158px;height:5px;background:#2a2d31"></div>
<div class="a" style="left:874px;top:422.5px;width:50px;height:4px;border-radius:2px;background:#bdb9b9"></div>
<div class="a dk" style="left:1036px;top:79px;width:236px;height:343px;overflow:hidden" id="tbl">
<span class="t c1" style="top:12.8px;color:#dadada">FusionPe...</span><span class="t c2" style="top:12.8px;color:#dadada">FusionPerfor...</span><span class="t c3" style="top:12.8px;color:#dadada">17.02.2021 1</span>
<span class="t c1" style="top:31.1px;color:#dadada">FusionTe...</span><span class="t c2" style="top:31.1px;color:#dadada">FusionTextCr...</span><span class="t c3" style="top:31.1px;color:#dadada">19.05.2021 1</span>
<span class="t c1" style="top:49.4px;color:#dadada">kenny</span><span class="t c2" style="top:49.4px;color:#dadada">kenny.via</span><span class="t c3" style="top:49.4px;color:#dadada">11.06.2019 0</span>
<span class="t c1" style="top:67.7px;color:#dadada">libero</span><span class="t c2" style="top:67.7px;color:#dadada">libero.via</span><span class="t c3" style="top:67.7px;color:#dadada">23.02.2021 0</span>
<span class="t c1" style="top:86.0px;color:#dadada">livingroo...</span><span class="t c2" style="top:86.0px;color:#dadada">livingroom20...</span><span class="t c3" style="top:86.0px;color:#dadada">12.09.2019 1</span>
<span class="t c1" style="top:104.3px;color:#dadada">LoTR<i class="u">_</i>Text</span><span class="t c2" style="top:104.3px;color:#dadada">LoTR<i class="u">_</i>Text.via</span><span class="t c3" style="top:104.3px;color:#dadada">16.02.2021 1</span>
<span class="t c1" style="top:122.6px;color:#dadada">mask<i class="u">_</i>def...</span><span class="t c2" style="top:122.6px;color:#dadada">mask<i class="u">_</i>deform...</span><span class="t c3" style="top:122.6px;color:#dadada">31.08.2020 1</span>
<span class="t c1" style="top:141.0px;color:#dadada">MNF</span><span class="t c2" style="top:141.0px;color:#dadada">MNF.via</span><span class="t c3" style="top:141.0px;color:#dadada">16.08.2016 1</span>
<span class="t c1" style="top:159.3px;color:#dadada">multiview...</span><span class="t c2" style="top:159.3px;color:#dadada">multiviewer.via</span><span class="t c3" style="top:159.3px;color:#dadada">08.03.2021 0</span>
<span class="t c1" style="top:177.6px;color:#dadada">multizone</span><span class="t c2" style="top:177.6px;color:#dadada">multizone.via</span><span class="t c3" style="top:177.6px;color:#dadada">03.12.2018 1</span>
<span class="t c1" style="top:195.9px;color:#dadada">Nick's-...</span><span class="t c2" style="top:195.9px;color:#dadada">Nick's-Archiv...</span><span class="t c3" style="top:195.9px;color:#dadada">22.01.2021 1</span>
<span class="t c1" style="top:214.2px;color:#dadada">Performer</span><span class="t c2" style="top:214.2px;color:#dadada">Performer.via</span><span class="t c3" style="top:214.2px;color:#dadada">23.06.2018 0</span>
<span class="t c1" style="top:232.5px;color:#dadada">planar<i class="u">_</i>re...</span><span class="t c2" style="top:232.5px;color:#dadada">planar<i class="u">_</i>reflect...</span><span class="t c3" style="top:232.5px;color:#dadada">26.03.2020 1</span>
<div class="a sel" style="left:0;top:248.2px;width:231px;height:18.6px"></div><span class="t c1" style="top:250.8px;color:#3d424c">sample</span><span class="t c2" style="top:250.8px;color:#3d424c">sample.via</span><span class="t c3" style="top:250.8px;color:#3d424c">04.06.2021 1</span>
<span class="t c1" style="top:269.1px;color:#dadada">test<i class="u">_</i>archi...</span><span class="t c2" style="top:269.1px;color:#dadada">test<i class="u">_</i>archive.via</span><span class="t c3" style="top:269.1px;color:#dadada">26.05.2021 1</span>
<span class="t c1" style="top:287.4px;color:#dadada">Theycallit...</span><span class="t c2" style="top:287.4px;color:#dadada">Theycallitatre...</span><span class="t c3" style="top:287.4px;color:#dadada">06.12.2018 1</span>
<span class="t c1" style="top:305.8px;color:#dadada">Viz4Interior</span><span class="t c2" style="top:305.8px;color:#dadada">Viz4Interior.via</span><span class="t c3" style="top:305.8px;color:#dadada">30.04.2020 1</span>
<span class="t c1" style="top:324.1px;color:#dadada">Viz4Scenes</span><span class="t c2" style="top:324.1px;color:#dadada">Viz4Scenes.via</span><span class="t c3" style="top:324.1px;color:#dadada">14.05.2021 1</span>
<div class="a" style="left:0;top:0;width:231px;height:18px;background:#2e3135"></div><div class="a" style="left:82px;top:0;width:1px;height:18px;background:#3a3d41"></div><div class="a" style="left:166px;top:0;width:1px;height:18px;background:#3a3d41"></div><span class="t" style="left:0;width:82px;text-align:center;top:3px;color:#ececec">Objectname</span><span class="t" style="left:83px;width:83px;text-align:center;top:3px;color:#ececec">Filename</span><span class="t" style="left:200px;top:3px;color:#ececec">Date</span>
<div class="a" style="left:231px;top:0;width:5px;height:343px;background:#2a2d31"></div><div class="a" style="left:231.5px;top:110px;width:4px;height:165px;border-radius:2px;background:#bdb9b9"></div>
</div>
<div class="a" style="left:1036px;top:422px;width:236px;height:5px;background:#2a2d31"></div>
<div class="a" style="left:1037px;top:422.5px;width:205px;height:4px;border-radius:2px;background:#bdb9b9"></div>
<svg style="left:1242px;top:28px" width="11" height="11" viewBox="0 0 11 11"><g stroke="#6e7174" stroke-width="1" fill="none"><path d="M0.5 3.5V0.5H3.5M0.5 0.5L3.8 3.8M7.5 0.5H10.5V3.5M10.5 0.5L7.2 3.8M0.5 7.5V10.5H3.5M0.5 10.5L3.8 7.2M10.5 7.5V10.5H7.5M10.5 10.5L7.2 7.2"/></g></svg>
<svg style="left:1265px;top:30px" width="7" height="7" viewBox="0 0 7 7"><path d="M0.3 0.3L6.7 6.7M6.7 0.3L0.3 6.7" stroke="#85888b" stroke-width="1.2"/></svg>
<div class="a" style="left:1061px;top:437px;width:22px;height:1px;background:#8d9093"></div>
</div>
<!-- ARCHIVE -->
<div id="archive">
<div class="a" style="left:863.5px;top:440px;width:1px;height:410px;background:#2b2e32"></div>
<div class="a" style="left:864px;top:461px;width:414px;height:1px;background:#2a2c30"></div>
<div class="a dk" style="left:864px;top:440px;width:56px;height:21px"></div>
<span class="t" style="left:873px;top:443px;color:#ececec">Archive</span>
<svg style="left:1242px;top:445px" width="11" height="11" viewBox="0 0 11 11"><g stroke="#6e7174" stroke-width="1" fill="none"><path d="M0.5 3.5V0.5H3.5M0.5 0.5L3.8 3.8M7.5 0.5H10.5V3.5M10.5 0.5L7.2 3.8M0.5 7.5V10.5H3.5M0.5 10.5L3.8 7.2M10.5 7.5V10.5H7.5M10.5 10.5L7.2 7.2"/></g></svg>
<svg style="left:1265px;top:447px" width="7" height="7" viewBox="0 0 7 7"><path d="M0.3 0.3L6.7 6.7M6.7 0.3L0.3 6.7" stroke="#85888b" stroke-width="1.2"/></svg>
<div class="a" style="left:873px;top:469px;width:109px;height:21px;border-radius:3px;background:#585c5f"></div>
<span class="t" style="left:878px;top:473px;color:#ececec;letter-spacing:-0.22px">Entry Point View</span>
<div class="a" style="left:963px;top:472px;width:1px;height:14px;background:#3f4246"></div>
<svg style="left:970px;top:474px" width="6" height="10" viewBox="0 0 6 10"><path d="M0.3 3.6L3 0.4L5.7 3.6ZM0.3 6.4L3 9.6L5.7 6.4Z" fill="#e8e8e8"/></svg>
<div class="a" style="left:986px;top:469px;width:121px;height:21px;border-radius:3px;background:#585c5f"></div>
<span class="t" style="left:991px;top:473px;color:#ececec">All</span>
<div class="a" style="left:1088px;top:472px;width:1px;height:14px;background:#3f4246"></div>
<svg style="left:1095px;top:474px" width="6" height="10" viewBox="0 0 6 10"><path d="M0.3 3.6L3 0.4L5.7 3.6ZM0.3 6.4L3 9.6L5.7 6.4Z" fill="#e8e8e8"/></svg>
<div class="a dk" style="left:873px;top:495px;width:109px;height:260px;overflow:hidden">
<div class="a sel" style="left:16px;top:1px;width:93px;height:15px"></div>
<svg style="left:19px;top:2px" width="14" height="12" viewBox="0 0 16 13" opacity=".75"><use href="#ic-fold-y"/></svg><span class="t" style="left:38px;top:1px;color:#3d424c">File Entrypoint</span>
<svg style="left:19px;top:17px" width="14" height="12" viewBox="0 0 16 13"><use href="#ic-fold-b"/></svg><span class="t" style="left:38px;top:16px;color:#dadada">FolderA</span>
<div class="a" style="left:0;top:254px;width:109px;height:6px;background:#2a2d31"></div><div class="a" style="left:1px;top:255px;width:96px;height:4px;border-radius:2px;background:#bdb9b9"></div>
</div>
<div class="a" style="left:983px;top:603px;width:1px;height:20px;background:#9a9da0"></div>
<div class="a dk" style="left:987px;top:495px;width:285px;height:260px"></div>
<div class="a" style="left:988px;top:497px;width:53px;height:53px;background:#b9cfee"></div>
<svg style="left:988px;top:508px" width="53" height="30"><use href="#scene" width="53" height="30"/></svg>
<div class="a sel" style="left:989px;top:552px;width:51px;height:11px"></div><span class="t" style="left:989px;width:51px;text-align:center;top:550px;color:#3d424c;letter-spacing:-0.3px">MyScene</span>
<div class="a" style="left:1061px;top:756px;width:22px;height:1px;background:#8d9093"></div>
<span class="t" style="left:873px;top:760px;color:#d4d4d4">Comment</span>
<div class="a dk" style="left:873px;top:779px;width:399px;height:38px"></div>
<div class="a" style="left:873px;top:822px;width:399px;height:22px;border-radius:3px;background:#585c5f;text-align:center;line-height:22px;color:#ececec">Import Archive</div>
</div>
<!-- POPUP -->
<div id="popup">
<div class="a" style="left:67px;top:517px;width:601px;height:194px;background:#383b3f;box-shadow:0 1px 3px rgba(0,0,0,.6)"></div>
<div class="a dk" style="left:68px;top:522px;width:135px;height:189px"></div>
<div class="a dk" style="left:208px;top:525px;width:460px;height:186px"></div>
<div class="a" style="left:659px;top:517.5px;width:8px;height:1.5px;background:#24272b"></div>
<svg style="left:87px;top:525px" width="16" height="13" viewBox="0 0 16 13"><use href="#ic-fold-y"/></svg><span class="t" style="left:108px;top:525px;color:#e0e0e0">existing<i class="u">_</i>folder</span>
<div class="a sel" style="left:84px;top:541px;width:106px;height:18px"></div>
<svg style="left:87px;top:544px" width="16" height="13" viewBox="0 0 16 13"><use href="#ic-fold-b"/></svg><span class="t" style="left:108px;top:544px;color:#3d424c">existing<i class="u">_</i>project</span>
<div class="a" style="left:214px;top:526.5px;width:67px;height:66.5px;background:#d6d6d6"></div><svg style="left:214px;top:538px" width="67" height="43"><use href="#photo" width="67" height="43"/></svg><div class="a bdg" style="left:267.5px;top:581px">I</div><span class="t" style="left:207.5px;width:80px;text-align:center;top:596px;color:#e0e0e0;letter-spacing:-0.3px">IMG<i class="u">_</i>7871</span>
<div class="a" style="left:293px;top:535px;width:67px;height:49px;background:#c9d1de"></div><svg style="left:293px;top:541px" width="67" height="37"><use href="#scene2" width="67" height="37"/></svg><div class="a bdg" style="left:346.5px;top:581px">S</div><span class="t" style="left:286.5px;width:80px;text-align:center;top:596px;color:#e0e0e0;letter-spacing:-0.3px">MyScene</span>
<div class="a" style="left:372px;top:526.5px;width:67px;height:66.5px;background:#d6d6d6"></div><svg style="left:372px;top:540px" width="67" height="38" viewBox="0 0 67 38"><rect width="67" height="38" fill="#000"/><ellipse cx="16.6" cy="32.4" rx="16.4" ry="5" fill="#2450e6"/><ellipse cx="16.6" cy="33" rx="9" ry="2.6" fill="#5a9cff" filter="url(#bl1)"/><ellipse cx="50.2" cy="33.4" rx="12" ry="3.4" fill="#fff" filter="url(#bl1)"/><circle cx="16.6" cy="16.3" r="16.3" fill="url(#bsph)"/><ellipse cx="16.6" cy="27" rx="11" ry="4.6" fill="#3fd0ff" opacity=".75" filter="url(#bl1)"/><ellipse cx="16.2" cy="7.6" rx="10.6" ry="5.8" fill="#d6ecff" opacity=".7"/><circle cx="50.2" cy="16.3" r="16.3" fill="url(#gsph)"/><ellipse cx="50.2" cy="28" rx="10" ry="3.6" fill="#e8e8e8" opacity=".7" filter="url(#bl1)"/><ellipse cx="50.2" cy="7.2" rx="10.4" ry="5.2" fill="#d0d0d0" opacity=".45"/></svg><div class="a bdg" style="left:425.5px;top:581px">I</div><span class="t" style="left:365.5px;width:80px;text-align:center;top:596px;color:#e0e0e0;letter-spacing:-0.3px">Picture1</span>
<div class="a" style="left:451px;top:535px;width:67px;height:49px;background:#cfcfcf"></div><svg style="left:451px;top:535px" width="67" height="49" viewBox="0 0 67 49"><text x="3.6" y="27.8" font-family="Liberation Serif,serif" font-size="13" fill="#111" stroke="#111" stroke-width="0.25">R</text><text x="12.2" y="27.4" font-family="Liberation Serif,serif" font-size="10.6" fill="#111" stroke="#111" stroke-width="0.25" textLength="52.6" lengthAdjust="spacingAndGlyphs">INGBEARER</text></svg><div class="a bdg" style="left:504.5px;top:581px">FL</div><span class="t" style="left:444.5px;width:80px;text-align:center;top:596px;color:#e0e0e0;letter-spacing:-0.3px">RINGM<i class="u">_</i><i class="u">_</i><i class="u">_</i>[...</span>
<div class="a" style="left:530px;top:535px;width:67px;height:49px;background:#fff"></div><svg style="left:530px;top:535px" width="67" height="49" viewBox="0 0 67 49"><text x="3.6" y="15.4" font-family="Liberation Serif,serif" font-size="6.8" fill="#111" stroke="#111" stroke-width="0.15" textLength="61" lengthAdjust="spacingAndGlyphs">RINGBEARER MEDIUM</text><text x="3.6" y="35.4" font-family="Liberation Serif,serif" font-size="22.5" fill="#111" textLength="35.5" lengthAdjust="spacingAndGlyphs">ABC</text><text x="41.6" y="33" font-family="Liberation Serif,serif" font-size="12.8" fill="#111" textLength="21.5" lengthAdjust="spacing">123</text></svg><div class="a bdg" style="left:583.5px;top:581px">FF</div><span class="t" style="left:523.5px;width:80px;text-align:center;top:596px;color:#e0e0e0;letter-spacing:-0.3px">Ringbearer...</span>
<div class="a" style="left:214px;top:614px;width:67px;height:67px;background:#000"></div><svg style="left:214px;top:614px" width="67" height="67" viewBox="0 0 67 67"><g fill="#f2f2f2" filter="url(#bl0)"><path d="M30.6 7H36.2L35.2 9.2H34.6V11.4H32.4V9.2H31.6Z"/><ellipse cx="33.4" cy="18.2" rx="4.1" ry="7.2"/><rect x="24.2" y="19.8" width="18.4" height="3.2" rx="1.4"/><path d="M9 32.6Q20 29.4 30 29.2H37Q47 29.4 58 32.6L57.6 33.8Q46 31.4 38.6 32Q40.8 37 40.4 42Q40 46 39.6 50L39.8 56H35.6L35 48L33.4 45.4L31.8 48L31.2 56H27.4L27.4 50Q26.8 46 26.8 42Q26.6 37 28.6 32Q20 31.4 9.4 33.8Z"/><path d="M27.2 55.4H31.6L32.4 62.4H25.2ZM35.4 55.4H39.8L41.6 62.4H34.4Z"/></g></svg><div class="a bdg" style="left:267.5px;top:669px">G</div><span class="t" style="left:207.5px;width:80px;text-align:center;top:683px;color:#e0e0e0;letter-spacing:-0.3px">zeb</span>
</div>
<!-- ARROWS -->
<div id="arrows">
<svg style="left:0;top:0" width="1280" height="854" viewBox="0 0 1280 854"><path d="M350.5 439.5a9 9 0 0 1 9-9h4a9 9 0 0 1 9 9V476h11L361.5 514.5L339.5 476h11Z" fill="#fbd855" stroke="#1a1c20" stroke-width="0.8"/><path d="M1013 531L484 320.5" stroke="#e9c840" stroke-width="1.3" fill="none"/><path d="M476 317L487.5 316L485 323.5Z" fill="#f0cf45"/><path d="M1117 340V534" stroke="#e3c143" stroke-width="1.5" fill="none"/><path d="M1113.3 531.5H1120.7L1117 541.5Z" fill="#f0cf45"/></svg>
<div class="a" style="left:416px;top:281px;width:54px;height:53px;background:#b9cfee"></div>
<svg style="left:416px;top:293px" width="54" height="29"><use href="#scene" width="54" height="29"/></svg>
<div class="a sel" style="left:418px;top:336px;width:51px;height:11px"></div><span class="t" style="left:418px;width:51px;text-align:center;top:334.5px;color:#454a55;letter-spacing:-0.25px">MyScene</span>
<svg style="left:440px;top:320px" width="20" height="26" viewBox="0 0 20 26"><path d="M1.5 1.2V15.2L4.8 12.2L7.2 17.6L9.6 16.6L7.2 11.2H11.6Z" fill="#fff" stroke="#222" stroke-width="0.9"/><rect x="10.5" y="17.5" width="7.5" height="7.5" fill="#fff" stroke="#222" stroke-width="0.8"/><path d="M14.25 19V23.5M12 21.25H16.5" stroke="#000" stroke-width="1.3"/></svg>
</div>
</body></html>
